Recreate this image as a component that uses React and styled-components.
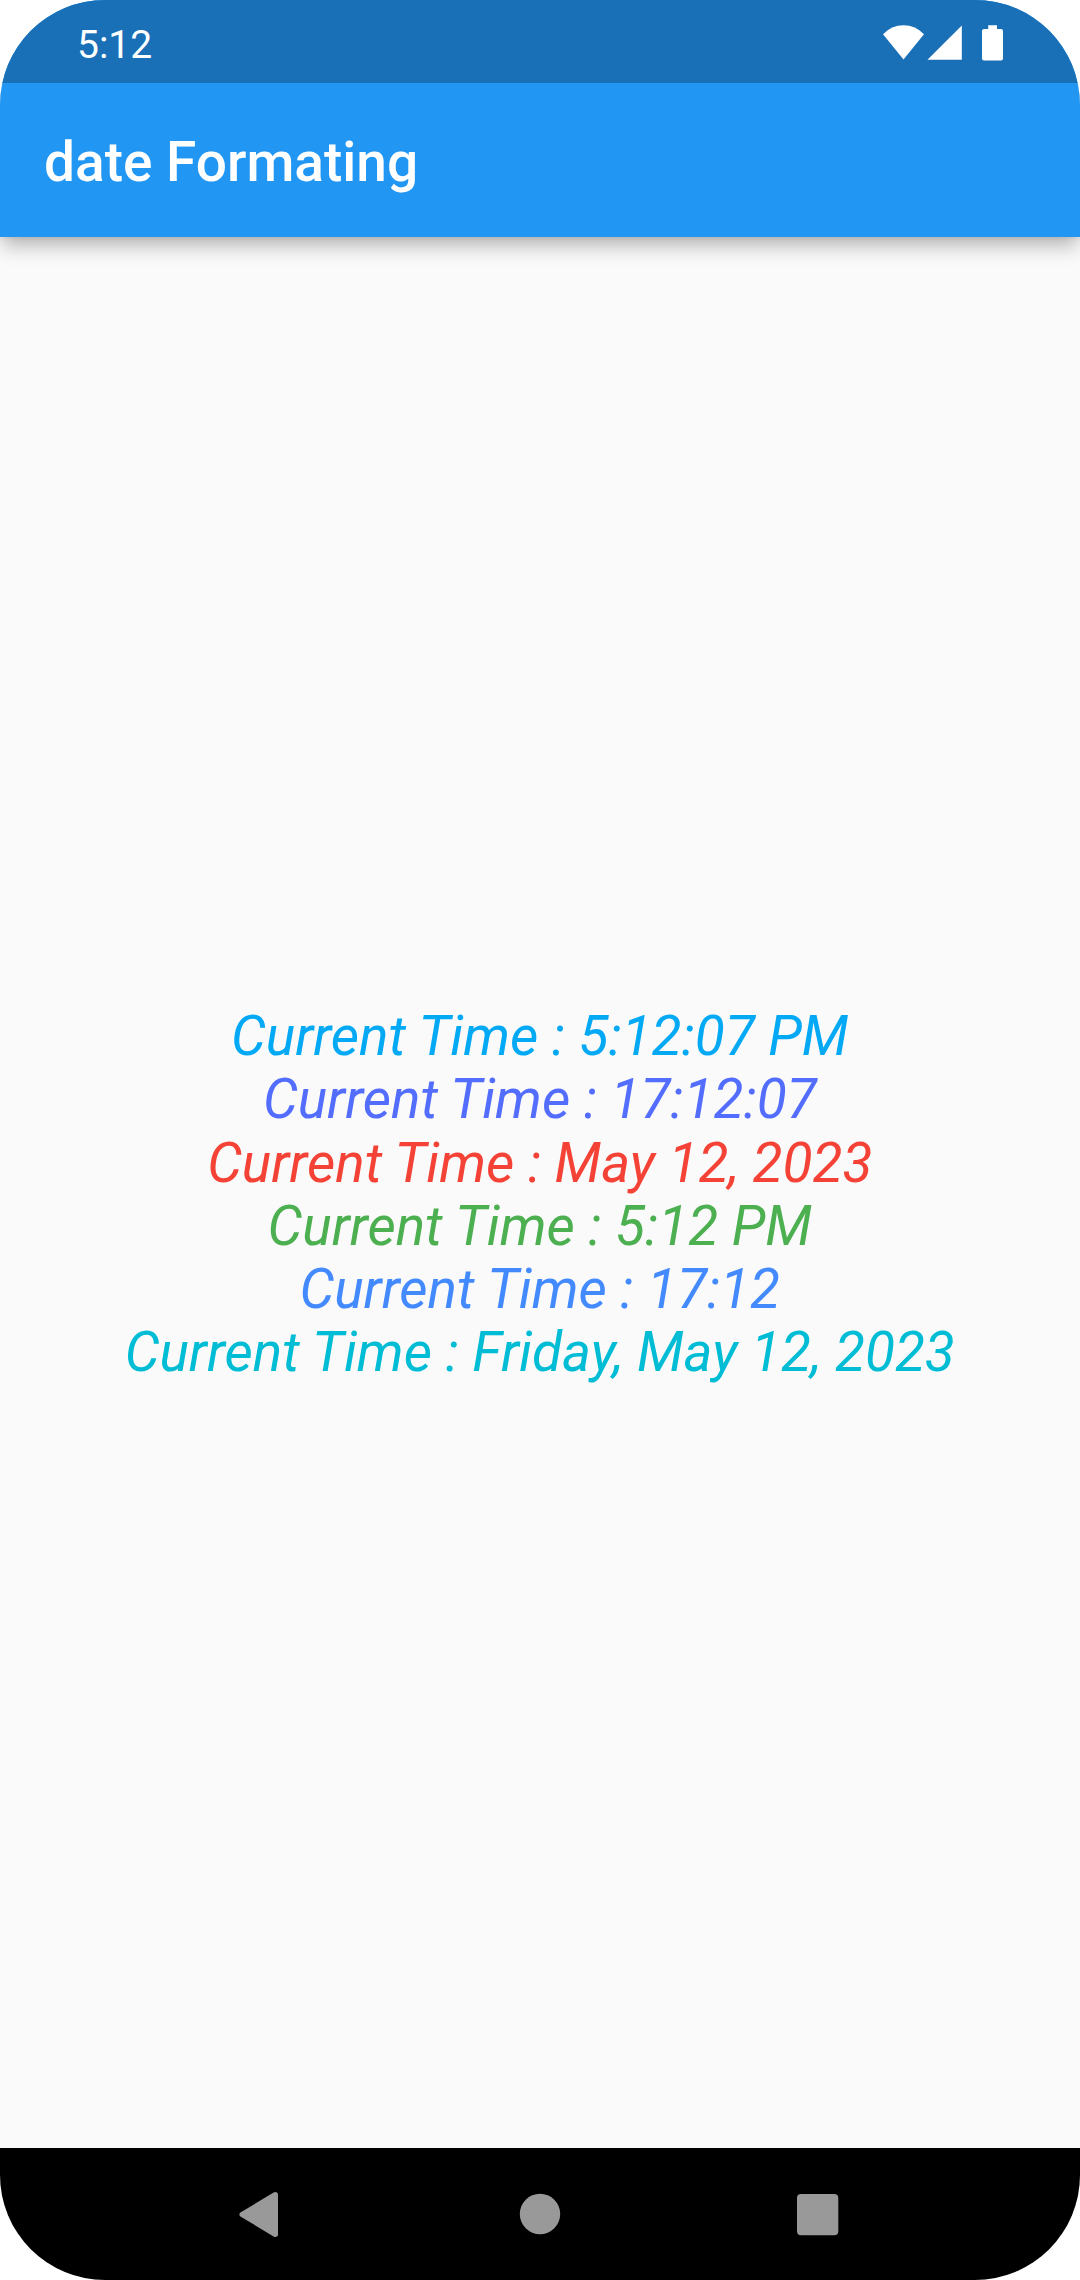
import React from "react";
import styled, { createGlobalStyle } from "styled-components";

const GlobalStyle = createGlobalStyle`
  body {
    margin: 0;
    background: #ffffff;
  }
`;

const Screen = styled.div`
  display: flex;
  flex-direction: column;
  width: 1080px;
  height: 2280px;
  overflow: hidden;
  border-radius: 105px;
  background: #fafafa;
  font-family: Roboto, "Liberation Sans", sans-serif;
`;

const Header = styled.header`
  flex: none;
  background: #2196f3;
  box-shadow: 0 11px 18px -2px rgba(0, 0, 0, 0.27), 0 1px 5px rgba(0, 0, 0, 0.08);
`;

const StatusBar = styled.div`
  display: flex;
  align-items: flex-start;
  justify-content: space-between;
  box-sizing: border-box;
  height: 83px;
  padding: 21px 74px 0 77px;
  background: #1a70b7;
`;

const Clock = styled.time`
  color: #ffffff;
  font-size: 39px;
  line-height: 48px;
`;

const StatusIcons = styled.svg`
  display: block;
  width: 125px;
  height: 41px;
  fill: #ffffff;
`;

const AppBar = styled.div`
  display: flex;
  align-items: center;
  box-sizing: border-box;
  height: 154px;
  padding: 4px 44px 0;
`;

const Title = styled.h1`
  margin: 0;
  color: #ffffff;
  font-size: 55px;
  font-weight: 500;
  line-height: 64px;
`;

const Content = styled.main`
  display: flex;
  flex: 1;
  flex-direction: column;
  align-items: center;
  justify-content: center;
  padding: 4.5px 0.5px 0 0;
`;

const TimeLine = styled.div`
  color: ${({ $color }) => $color};
  font-size: 55px;
  font-style: italic;
  line-height: 63.25px;
  white-space: nowrap;
`;

const NavBar = styled.nav`
  display: flex;
  flex: none;
  align-items: center;
  justify-content: center;
  gap: 180px;
  height: 132px;
  background: #000000;
`;

const NavButton = styled.button`
  width: 120px;
  height: 80px;
  padding: 0;
  border: 0;
  background: none;
`;

const NavIcon = styled.svg`
  display: block;
  width: 120px;
  height: 80px;
  fill: #999999;
`;

const lines = [
  { text: "Current Time : 5:12:07 PM", color: "#03a9f4" },
  { text: "Current Time : 17:12:07", color: "#536dfe" },
  { text: "Current Time : May 12, 2023", color: "#f44336" },
  { text: "Current Time : 5:12 PM", color: "#4caf50" },
  { text: "Current Time : 17:12", color: "#448aff" },
  { text: "Current Time : Friday, May 12, 2023", color: "#00bcd4" },
];

const navItems = [
  { label: "Back", shape: <path d="M60.8 38.3 93.6 18.6C95.6 17.4 98 18.4 98 20.8V60.2C98 62.6 95.6 63.6 93.6 62.4L60.8 42.7C58.9 41.5 58.9 39.5 60.8 38.3Z" /> },
  { label: "Home", shape: <circle cx="60" cy="40" r="20.2" /> },
  { label: "Overview", shape: <rect x="17" y="20" width="41.3" height="41.3" rx="4" /> },
];

export default function App() {
  return (
    <>
      <GlobalStyle />
      <Screen>
        <Header>
          <StatusBar>
            <Clock>5:12</Clock>
            <StatusIcons viewBox="881 21 125 41" aria-hidden="true">
              <path d="M883 34.3Q891.5 25.3 903.5 25.3T924 34.3L903.5 59.5Z" />
              <path d="M961.8 25.5V59.8H927.5Z" />
              <path d="M988.2 25.2H997V29H1001Q1003 29 1003 31V58.6Q1003 60.6 1001 60.6H984Q982 60.6 982 58.6V31Q982 29 984 29H988.2Z" />
            </StatusIcons>
          </StatusBar>
          <AppBar>
            <Title>date Formating</Title>
          </AppBar>
        </Header>
        <Content>
          {lines.map(({ text, color }) => (
            <TimeLine key={text} $color={color}>
              {text}
            </TimeLine>
          ))}
        </Content>
        <NavBar>
          {navItems.map(({ label, shape }) => (
            <NavButton key={label} aria-label={label}>
              <NavIcon viewBox="0 0 120 80">{shape}</NavIcon>
            </NavButton>
          ))}
        </NavBar>
      </Screen>
    </>
  );
}
